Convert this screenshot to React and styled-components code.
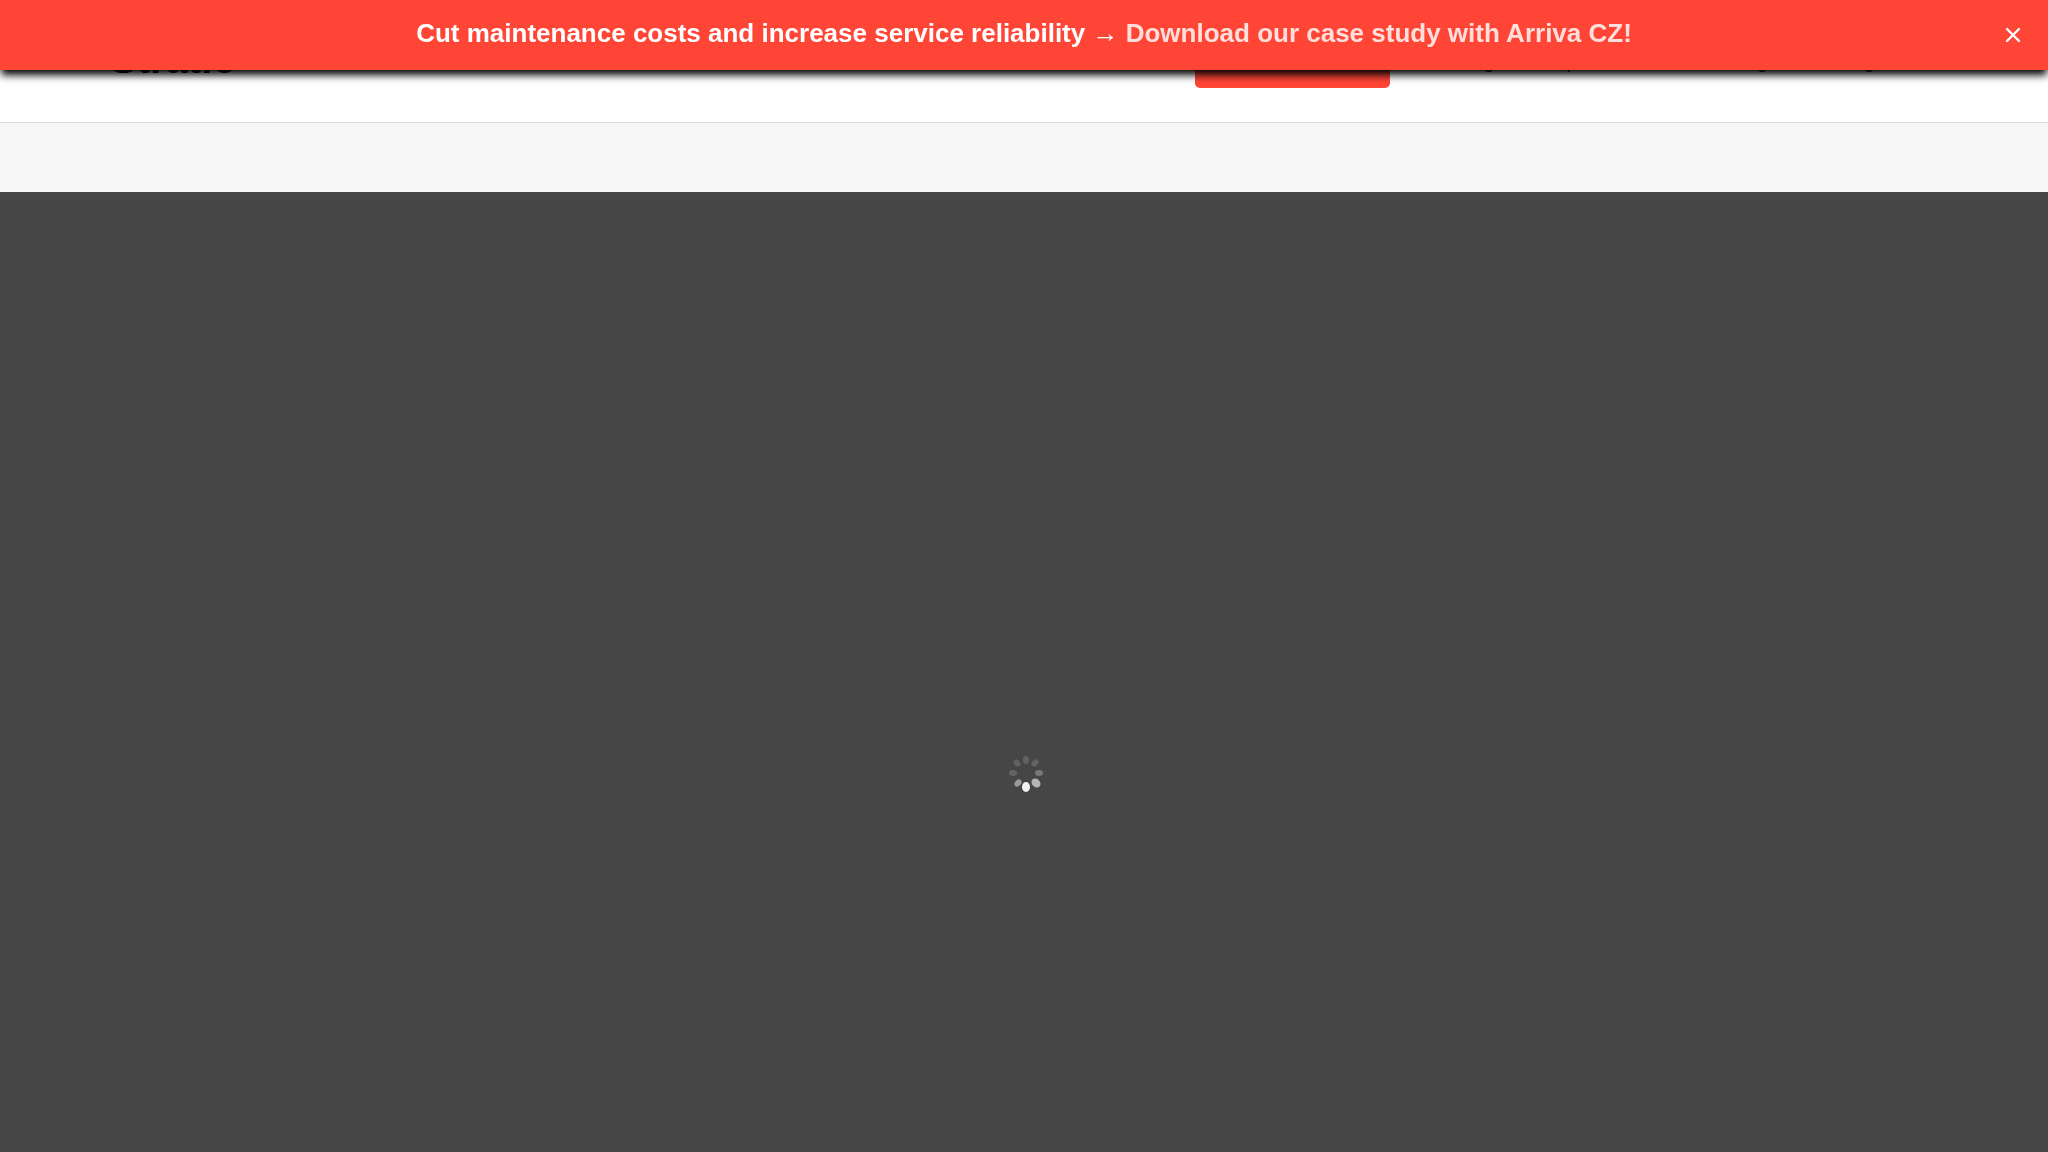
import React from "react";
import styled, { createGlobalStyle } from "styled-components";

const GlobalStyle = createGlobalStyle`
  * { box-sizing: border-box; }
  html, body { margin: 0; background: #464646; }
  body { font-family: "Liberation Sans", Arial, sans-serif; }
`;
const Page = styled.div`
  display: flex;
  flex-direction: column;
  min-height: 100vh;
`;
const Banner = styled.aside`
  position: fixed;
  inset: 0 0 auto;
  z-index: 2;
  display: flex;
  align-items: center;
  justify-content: center;
  height: 70px;
  padding-bottom: 4px;
  background: #ff4536;
  box-shadow: 0 6px 8px -1px #000;
`;
const Message = styled.p`
  margin: 0;
  color: #fff;
  font-size: 26px;
  line-height: 36px;
  font-weight: 700;
`;
const CaseLink = styled.a`
  color: #ffdfdb;
  text-decoration: none;
`;
const Close = styled.button`
  position: absolute;
  right: 24px;
  top: 24px;
  display: flex;
  padding: 0;
  border: 0;
  background: none;
  color: #fff;
  cursor: pointer;
`;
const Header = styled.header`
  display: flex;
  align-items: flex-start;
  height: 123px;
  padding: 36px 174px 0 110px;
  background: #fff;
  border-bottom: 1px solid #d9d9d9;
`;
const Logo = styled.a`
  color: #111;
  font-size: 40px;
  line-height: 46px;
  font-weight: 700;
  text-decoration: none;
`;
const Nav = styled.nav`
  display: flex;
  gap: 52px;
  margin-left: auto;
`;
const NavLink = styled.a`
  color: #111;
  font-size: 18px;
  line-height: 52px;
  text-decoration: none;
`;
const Demo = styled.a`
  width: 195px;
  height: 52px;
  margin-right: 16px;
  border-radius: 5px;
  background: #ff4536;
`;
const Strip = styled.div`
  height: 69px;
  background: #f7f7f7;
`;
const Stage = styled.main`
  flex: 1;
  display: flex;
  align-items: center;
  justify-content: center;
  padding: 202px 0 0 4px;
  background: #464646;
`;

const petals = [
  [18, 6, 0, "#636363", 3],
  [27, 9, 45, "#636363", 3],
  [31, 19, 90, "#777", 3],
  [28, 29, -45, "#b5b5b5", 4],
  [18, 33, 0, "#f2f2f2", 4],
  [10, 29, 45, "#9a9a9a", 3],
  [5, 19, 90, "#646464", 3],
  [9, 9, -45, "#606060", 3],
];

const links = ["Blog", "Expertise", "Onboarding", "Pricing"];

export default function App() {
  return (
    <Page>
      <GlobalStyle />
      <Banner>
        <Message>
          Cut maintenance costs and increase service reliability →{" "}
          <CaseLink href="#case-study">Download our case study with Arriva CZ!</CaseLink>
        </Message>
        <Close aria-label="Close">
          <svg width="22" height="22" viewBox="0 0 22 22" stroke="currentColor" strokeWidth="2.4" strokeLinecap="round">
            <path d="M5 5L17 17M17 5L5 17" />
          </svg>
        </Close>
      </Banner>
      <Header>
        <Logo href="#home">Stratio</Logo>
        <Nav>
          <Demo href="#demo" aria-label="Demo" />
          {links.map((name) => (
            <NavLink key={name} href={`#${name.toLowerCase()}`}>{name}</NavLink>
          ))}
        </Nav>
      </Header>
      <Strip />
      <Stage aria-busy="true">
        <svg width="36" height="38" viewBox="0 0 36 38" role="img" aria-label="Loading">
          {petals.map(([x, y, turn, fill, r]) => (
            <ellipse key={`${x}-${y}`} cx={x} cy={y} rx={r} ry={r + 1} fill={fill} transform={`rotate(${turn} ${x} ${y})`} />
          ))}
        </svg>
      </Stage>
    </Page>
  );
}
